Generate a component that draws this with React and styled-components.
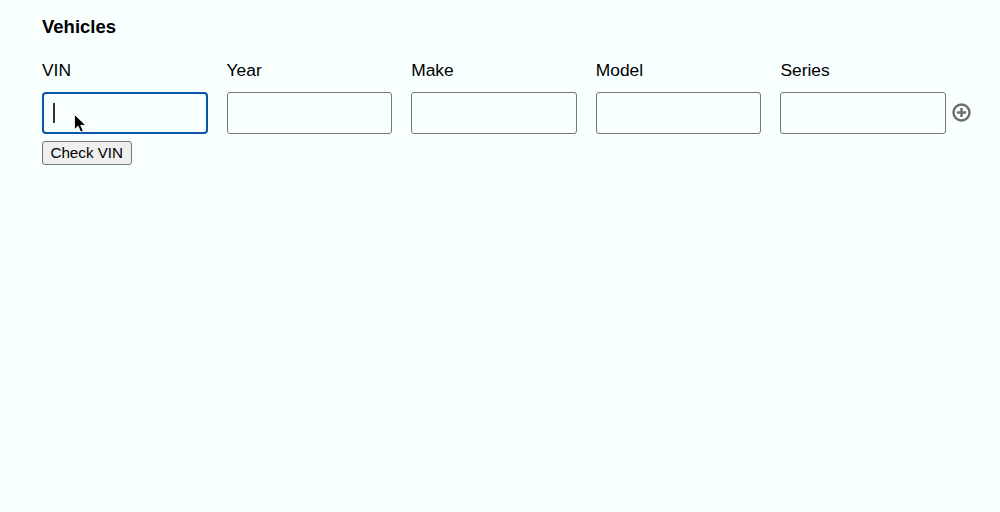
import styled, { createGlobalStyle } from 'styled-components';

const GlobalStyle = createGlobalStyle`
  html, body {
    margin: 0;
    background: #f8ffff;
    color: #000;
    font-family: "Liberation Sans", Arial, sans-serif;
  }
`;

const Page = styled.div`
  height: 512px;
  box-sizing: border-box;
  padding: 16px 0 0 42px;
  overflow: hidden;
`;

const Title = styled.h2`
  margin: 0 0 22px;
  font-size: 18.5px;
  line-height: 21px;
  font-weight: 700;
`;

const Row = styled.div`
  display: flex;
  align-items: flex-start;
`;

const Field = styled.div`
  width: 165.5px;
  margin-right: 19.1px;
  &:nth-child(5) {
    margin-right: 6px;
  }
`;

const Label = styled.label`
  display: block;
  height: 21px;
  margin-bottom: 11px;
  padding-top: 0.5px;
  font-size: 17.4px;
  line-height: 21px;
`;

const InputWrap = styled.div`
  position: relative;
  height: 42px;
`;

const Input = styled.div`
  box-sizing: border-box;
  width: 100%;
  height: 42px;
  background: #f8ffff;
  border-radius: ${p => (p.$focused ? '4px' : '3px')};
  border: ${p => (p.$focused ? '2.5px solid #0b55a8' : '1px solid #767676')};
`;

const Caret = styled.span`
  position: absolute;
  left: 11px;
  top: 11px;
  width: 1.5px;
  height: 20px;
  background: #333;
`;

const Pointer = styled.svg`
  position: absolute;
  left: 31px;
  top: 21px;
`;

const AddButton = styled.button`
  display: flex;
  align-self: flex-start;
  margin-top: 43.5px;
  padding: 0;
  border: 0;
  background: none;
  color: #6e6e6e;
`;

const CheckButton = styled.button`
  display: block;
  box-sizing: border-box;
  width: 89.5px;
  height: 24px;
  margin-top: 7px;
  padding: 0;
  background: #efefef;
  border: 1px solid #767676;
  border-radius: 3px;
  color: #000;
  font-family: inherit;
  font-size: 15.2px;
`;

const fields = ['VIN', 'Year', 'Make', 'Model', 'Series'];

export default function App() {
  return (
    <Page>
      <GlobalStyle />
      <Title>Vehicles</Title>
      <Row>
        {fields.map((name, i) => (
          <Field key={name}>
            <Label>{name}</Label>
            <InputWrap>
              <Input $focused={i === 0} />
              {i === 0 && (
                <>
                  <Caret />
                  <Pointer width="14" height="21" viewBox="0 0 14 21">
                    <path d="M1.5 1.5v15l3.6-3.4 2.6 6 2.5-1.1-2.5-5.7h5z" fill="#000" stroke="#fff" strokeWidth="0.8" />
                  </Pointer>
                </>
              )}
            </InputWrap>
          </Field>
        ))}
        <AddButton aria-label="Add vehicle">
          <svg width="20" height="20" viewBox="0 0 20 20" fill="none" stroke="currentColor" strokeWidth="2.4">
            <circle cx="9.5" cy="9.5" r="8" />
            <path d="M9.5 4.9v9.2M4.9 9.5h9.2" />
          </svg>
        </AddButton>
      </Row>
      <CheckButton>Check VIN</CheckButton>
    </Page>
  );
}
